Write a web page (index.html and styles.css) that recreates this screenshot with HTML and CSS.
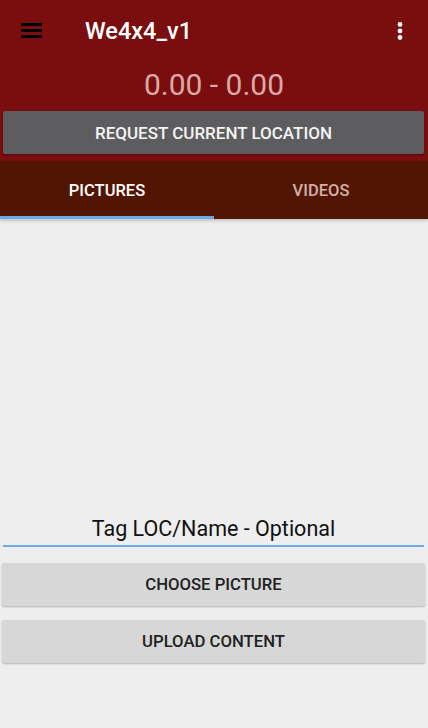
FILE: index.html
```html
<!DOCTYPE html>
<html>
<head>
<meta charset="utf-8">
<link rel="stylesheet" href="styles.css">
</head>
<body>
<div class="app">
  <header class="header">
    <div class="toolbar">
      <svg class="menu" width="21" height="16" viewBox="0 0 21 16"><rect x="0" y="0" width="21" height="3" fill="#000"/><rect x="0" y="6" width="21" height="3" fill="#000"/><rect x="0" y="12" width="21" height="3" fill="#000"/></svg>
      <div class="title">We4x4_v1</div>
      <svg class="more" width="6" height="18" viewBox="0 0 6 18"><circle cx="3" cy="2.5" r="2.4" fill="#fff"/><circle cx="3" cy="9" r="2.4" fill="#fff"/><circle cx="3" cy="15.5" r="2.4" fill="#fff"/></svg>
    </div>
    <div class="coords">0.00 - 0.00</div>
    <div class="req-wrap"><button class="req">REQUEST CURRENT LOCATION</button></div>
  </header>
  <nav class="tabs">
    <div class="tab active">PICTURES</div>
    <div class="tab">VIDEOS</div>
  </nav>
  <main class="content">
    <div class="spacer"></div>
    <div class="field">Tag LOC/Name - Optional</div>
    <button class="btn">CHOOSE PICTURE</button>
    <button class="btn">UPLOAD CONTENT</button>
  </main>
</div>
</body>
</html>
```
FILE: styles.css
```css
* { box-sizing: border-box; }
html, body { margin: 0; padding: 0; }
body { font-family: Roboto, "Noto Sans", sans-serif; background: #eeeeee; width: 428px; height: 728px; overflow: hidden; }
.app { display: flex; flex-direction: column; height: 728px; }
.header { background: #7a0d0e; height: 161px; display: flex; flex-direction: column; }
.toolbar { height: 62px; display: flex; align-items: center; padding: 0 0 0 21px; }
.menu { display: block; }
.title { color: #fff; font-size: 23.5px; font-weight: 500; margin-left: 43px; flex: 1; }
.more { display: block; margin-right: 25px; }
.coords { text-align: center; color: #dba8a8; font-size: 30px; height: 48px; line-height: 44px; margin-top: 1px; }
.req-wrap { padding: 0 4px 0 3px; margin-top: 0; }
.req { width: 100%; height: 43px; background: #5d5d5f; color: #f4f4f4; border: none; border-radius: 2px; font-family: Roboto, sans-serif; font-size: 17px; font-weight: 500; box-shadow: 0 1px 2px rgba(0,0,0,0.35); padding: 0; }
.tabs { background: #511503; height: 58px; display: flex; box-shadow: 0 2px 3px rgba(0,0,0,0.18); position: relative; z-index: 1; }
.tab { flex: 1; display: flex; align-items: center; justify-content: center; color: #d3aeaa; font-size: 16.5px; font-weight: 500; padding-top: 4px; border-bottom: 3px solid transparent; }
.tab.active { color: #ffffff; border-bottom-color: #6fa8e8; }
.content { flex: 1; display: flex; flex-direction: column; padding: 0 3px 0 2px; }
.spacer { height: 298px; }
.field { margin: 0 1px; text-align: center; font-size: 21.5px; color: #111; height: 30px; line-height: 24px; border-bottom: 2px solid #6fa8e8; }
.btn { height: 43px; background: #d6d7d6; border: none; border-radius: 2px; color: #222; font-family: Roboto, sans-serif; font-size: 16.7px; font-weight: 500; box-shadow: 0 1px 2px rgba(0,0,0,0.25); padding: 0; margin-top: 16px; }
.btn + .btn { margin-top: 14px; }
```
